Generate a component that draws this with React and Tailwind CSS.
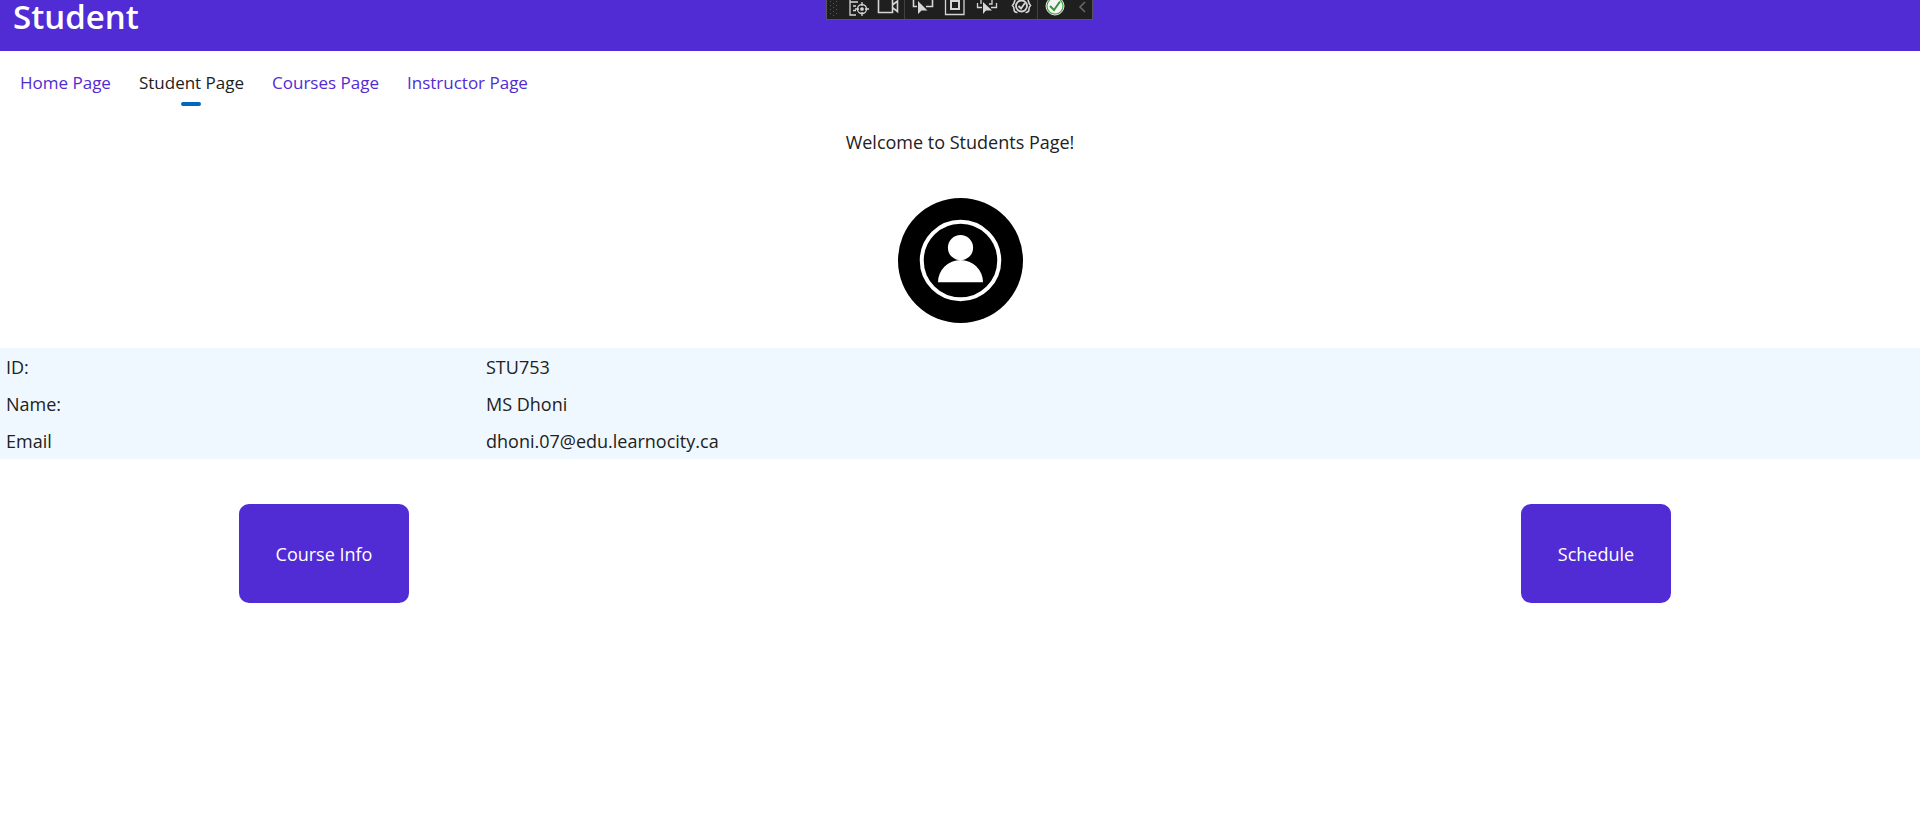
const tabs = ["Home Page", "Student Page", "Courses Page", "Instructor Page"];

const details = [
  ["ID:", "STU753"],
  ["Name:", "MS Dhoni"],
  ["Email", "dhoni.07@edu.learnocity.ca"],
];

function DebugToolbar() {
  return (
    <div className="absolute left-1/2 top-0 -ml-[134px] h-5 w-[267px] border border-t-0 border-[#56565a] bg-[#1f1f1f]">
      <svg className="block" width="265" height="19" viewBox="827 0 265 19" fill="none" stroke="#d6d6d6" strokeWidth="1.3" role="img" aria-label="Debug toolbar">
        <g fill="#5a5a5a" stroke="none">
          {[2, 6, 10, 14].map((y) => (
            <g key={y}>
              <rect x="830" y={y - 1} width="1" height="1" />
              <rect x="836" y={y - 1} width="1" height="1" />
              <rect x="833" y={y + 1} width="1" height="1" />
            </g>
          ))}
        </g>
        <path d="M850 0V15H856M850 2H858M853 6H856M853 10.500H856" />
        <circle cx="862" cy="9" r="4.5" />
        <circle cx="862" cy="9" r="1.2" fill="#d6d6d6" />
        <path d="M862 2V6M862 12V16M855 9H859M865 9H869" />
        <path d="M878.5 0V12.500H892.500V0M893 4.500L897.500 1V11.500L893 8" strokeWidth="1.6" />
        <path d="M904.5 0V19M1037.5 0V19" stroke="#424242" strokeWidth="1" />
        <path d="M913.500 0V6.500H917M926 6.500H932.500V0" strokeWidth="1.6" />
        <path d="M918 0V14L921.500 10.500H927.500L918 1Z" fill="#d6d6d6" stroke="none" />
        <path d="M945.500 0V14.500H964V0" />
        <rect x="951" y="1" width="8" height="8" strokeWidth="2" />
        <path d="M977.500 3V7.500H982M991 7.500H996.500V3M981 0V4M992 0V4H989" />
        <path d="M983 2V14L986 10.500H992Z" fill="#d6d6d6" stroke="none" />
        <circle cx="1021.500" cy="6" r="5.500" strokeWidth="1.8" />
        <path d="M1018.500 6L1021 8.500L1025 3" strokeWidth="1.8" />
        <path d="M1015 0Q1014 4 1012.500 5.500Q1014 7 1014 9Q1014 12.500 1017.500 12.500M1028 0Q1029 4 1030.500 5.500Q1029 7 1029 9Q1029 12.500 1025.500 12.500" strokeWidth="1.6" />
        <circle cx="1055" cy="6" r="9" fill="#3aa23a" stroke="#e4e4e4" strokeWidth="1" />
        <circle cx="1055" cy="6" r="7.5" fill="#f4f4f4" stroke="none" />
        <path d="M1050 6L1054 10L1060 1.500" stroke="#389438" strokeWidth="2" />
        <path d="M1085 2L1080 7L1085 12" stroke="#666" strokeWidth="1.6" />
      </svg>
    </div>
  );
}

export default function App() {
  return (
    <div className="min-h-screen bg-white text-[18px] leading-6 text-[#212121] [font-family:'Open_Sans',sans-serif]">
      <header className="relative h-[51px] bg-[#512bd4] pl-[13px]">
        <h1 className="text-[33px] font-semibold leading-[34px] text-white">Student</h1>
        <DebugToolbar />
      </header>
      <nav className="flex gap-7 px-5 pt-5 text-[17px]">
        {tabs.map((tab) => (
          <a key={tab} href="#" className={`flex flex-col items-center gap-[7px] ${tab === "Student Page" ? "text-[#212121]" : "text-[#512bd4]"}`}>
            {tab}
            {tab === "Student Page" && <span className="h-1 w-5 rounded-full bg-[#0067c0]" />}
          </a>
        ))}
      </nav>
      <main>
        <p className="pt-6 text-center">Welcome to Students Page!</p>
        <svg className="mx-auto mt-11 block" width="125" height="125" viewBox="0 0 125 125" role="img" aria-label="Student avatar">
          <circle cx="62.500" cy="62.500" r="62.500" />
          <circle cx="62.500" cy="62.500" r="38.750" fill="none" stroke="white" strokeWidth="4" />
          <circle cx="62.500" cy="49.700" r="12.600" fill="white" />
          <path d="M40 84.300A22.500 22.300 0 0 1 85 84.300Z" fill="white" />
        </svg>
        <table className="mt-[25px] w-full table-fixed bg-[#f0f8ff]">
          <tbody>
            {details.map(([label, value]) => (
              <tr key={label} className="h-[37px]">
                <th scope="row" className="w-1/4 px-1.5 text-left font-normal">{label}</th>
                <td className="px-1.5">{value}</td>
              </tr>
            ))}
          </tbody>
        </table>
        <div className="mt-[45px] grid grid-cols-3 px-1.5 text-white">
          <button className="h-[99px] justify-self-center rounded-[10px] bg-[#512bd4] px-[37px]">Course Info</button>
          <button className="col-start-3 h-[99px] justify-self-center rounded-[10px] bg-[#512bd4] px-[37px]">Schedule</button>
        </div>
      </main>
    </div>
  );
}
